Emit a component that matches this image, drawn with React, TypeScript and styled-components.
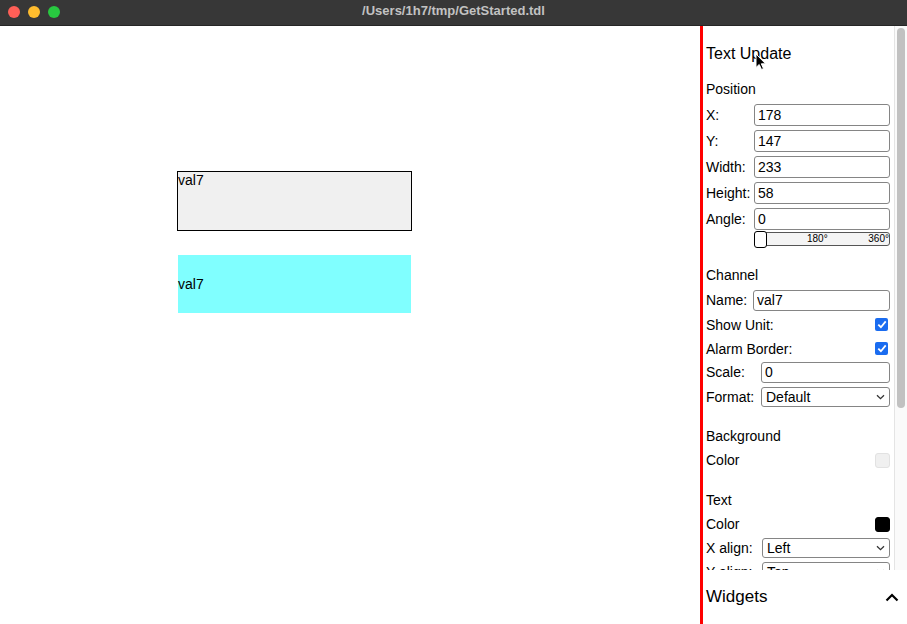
import React from "react";
import styled, { createGlobalStyle } from "styled-components";

const Global = createGlobalStyle`
  html, body { margin: 0; padding: 0; background: #ffffff; }
  body { font-family: "Liberation Sans", Arial, sans-serif; color: #000; }
  * { box-sizing: border-box; }
`;

const Window = styled.div`
  width: 907px;
  height: 624px;
  display: flex;
  flex-direction: column;
  overflow: hidden;
  border-radius: 0 0 10px 10px;
  background: #fff;
`;

const TitleBar = styled.div`
  height: 26px;
  flex: none;
  background: #373737;
  border-bottom: 1px solid #262626;
  display: flex;
  align-items: center;
  position: relative;
`;

const Lights = styled.div`
  display: flex;
  gap: 8px;
  padding-left: 8px;
  margin-top: -2px;
`;

const Light = styled.span<{ $c: string }>`
  width: 12px;
  height: 12px;
  border-radius: 50%;
  background: ${(p) => p.$c};
`;

const Title = styled.div`
  position: absolute;
  left: 0;
  right: 0;
  top: 3px;
  text-align: center;
  font-size: 13px;
  font-weight: bold;
  color: #c2c2c2;
`;

const Main = styled.div`
  flex: 1;
  display: flex;
  min-height: 0;
`;

const Canvas = styled.div`
  width: 703px;
  flex: none;
  position: relative;
  border-right: 3px solid #ff0000;
`;

const Widget = styled.div<{ $bordered?: boolean; $bg: string; $center?: boolean }>`
  position: absolute;
  background: ${(p) => p.$bg};
  border: ${(p) => (p.$bordered ? "1px solid #000" : "none")};
  font-size: 14px;
  display: flex;
  align-items: ${(p) => (p.$center ? "center" : "flex-start")};
  line-height: 16px;
`;

const Panel = styled.div`
  flex: 1;
  display: flex;
  flex-direction: column;
  min-width: 0;
  position: relative;
`;

const ScrollArea = styled.div`
  height: 544px;
  flex: none;
  display: flex;
  overflow: hidden;
`;

const Form = styled.div`
  flex: 1;
  min-width: 0;
  padding: 0 4px 0 3px;
  display: flex;
  flex-direction: column;
  font-size: 14px;
  & > * { flex: none; }
`;

const Track = styled.div`
  width: 13px;
  flex: none;
  border-left: 1px solid #e4e4e4;
  padding: 2px 2px 0 2px;
  background: #fafafa;
`;

const Thumb = styled.div`
  height: 380px;
  border-radius: 5px;
  background: #c1c1c1;
`;

const Heading = styled.div`
  font-size: 16px;
  line-height: 20px;
  margin-top: 18px;
`;

const SectionLabel = styled.div<{ $mt: number }>`
  line-height: 18px;
  margin-top: ${(p) => p.$mt}px;
`;

const Row = styled.div<{ $h: number; $mt?: number }>`
  height: ${(p) => p.$h}px;
  margin-top: ${(p) => p.$mt ?? 0}px;
  display: flex;
  align-items: center;
  justify-content: space-between;
`;

const Label = styled.span<{ $w?: number }>`
  width: ${(p) => (p.$w ? `${p.$w}px` : "auto")};
  flex: none;
  white-space: nowrap;
`;

const TextInput = styled.input<{ $h: number }>`
  flex: 1;
  width: 0;
  min-width: 0;
  height: ${(p) => p.$h}px;
  border: 1px solid #858585;
  border-radius: 3px;
  padding: 0 3px;
  font: 14px "Liberation Sans", Arial, sans-serif;
  color: #000;
  background: #fff;
`;

const SelectBox = styled.div`
  flex: 1;
  min-width: 0;
  height: 20px;
  border: 1px solid #858585;
  border-radius: 3px;
  padding: 0 4px;
  display: flex;
  align-items: center;
  justify-content: space-between;
  font-size: 14px;
  background: #fff;
`;

const Check = styled.span`
  width: 13px;
  height: 13px;
  border-radius: 2px;
  background: #1a6cf0;
  display: flex;
  align-items: center;
  justify-content: center;
  margin-right: 2px;
`;

const Swatch = styled.span<{ $c: string }>`
  width: 15px;
  height: 15px;
  border-radius: 3px;
  background: ${(p) => p.$c};
  border: 1px solid ${(p) => (p.$c === "#000" ? "#000" : "#e2e2e2")};
`;

const SliderRow = styled.div`
  margin: -1px 0 0 48px;
  height: 16px;
  display: flex;
  align-items: center;
  position: relative;
`;

const SliderTrack = styled.div`
  flex: 1;
  height: 14px;
  border: 1px solid #555;
  border-radius: 3px;
  background: #f4f4f4;
  position: relative;
  font-size: 10px;
  line-height: 12px;
`;

const SliderThumb = styled.span`
  position: absolute;
  left: -1px;
  top: -2px;
  width: 13px;
  height: 17px;
  border: 1px solid #000;
  border-radius: 3px;
  background: #fff;
`;

const Tick = styled.span<{ $left?: string; $right?: string }>`
  position: absolute;
  top: 0;
  ${(p) => (p.$left ? `left: ${p.$left};` : "")}
  ${(p) => (p.$right ? `right: ${p.$right};` : "")}
`;

const WidgetsBar = styled.div`
  flex: 1;
  display: flex;
  align-items: center;
  justify-content: space-between;
  padding: 0 8px 0 3px;
  font-size: 17px;
`;

const Cursor = styled.svg`
  position: absolute;
  left: 52px;
  top: 27px;
`;

const Chevron = () => (
  <svg width="9" height="6" viewBox="0 0 9 6">
    <path d="M1 1.2 L4.5 4.6 L8 1.2" fill="none" stroke="#333" strokeWidth="1.3" />
  </svg>
);

const Tickmark = () => (
  <svg width="10" height="9" viewBox="0 0 10 9">
    <path d="M1.3 4.6 L3.9 7.2 L8.7 1.4" fill="none" stroke="#fff" strokeWidth="1.8" />
  </svg>
);

export default function App() {
  return (
    <>
      <Global />
      <Window>
        <TitleBar>
          <Lights>
            <Light $c="#fe5f57" />
            <Light $c="#febc2e" />
            <Light $c="#28c840" />
          </Lights>
          <Title>/Users/1h7/tmp/GetStarted.tdl</Title>
        </TitleBar>
        <Main>
          <Canvas>
            <Widget $bordered $bg="#f0f0f0" style={{ left: 177, top: 145, width: 235, height: 60 }}>
              val7
            </Widget>
            <Widget $center $bg="#80ffff" style={{ left: 178, top: 229, width: 233, height: 58 }}>
              val7
            </Widget>
          </Canvas>
          <Panel>
            <ScrollArea>
              <Form>
                <Heading>Text Update</Heading>
                <SectionLabel $mt={16}>Position</SectionLabel>
                <Row $h={26} $mt={4}>
                  <Label $w={48}>X:</Label>
                  <TextInput $h={22} defaultValue="178" />
                </Row>
                <Row $h={26}>
                  <Label $w={48}>Y:</Label>
                  <TextInput $h={22} defaultValue="147" />
                </Row>
                <Row $h={26}>
                  <Label $w={48}>Width:</Label>
                  <TextInput $h={22} defaultValue="233" />
                </Row>
                <Row $h={26}>
                  <Label $w={48}>Height:</Label>
                  <TextInput $h={22} defaultValue="58" />
                </Row>
                <Row $h={26}>
                  <Label $w={48}>Angle:</Label>
                  <TextInput $h={22} defaultValue="0" />
                </Row>
                <SliderRow>
                  <SliderTrack>
                    <SliderThumb />
                    <Tick $left="52px">180°</Tick>
                    <Tick $right="0">360°</Tick>
                  </SliderTrack>
                </SliderRow>
                <SectionLabel $mt={19}>Channel</SectionLabel>
                <Row $h={24} $mt={4}>
                  <Label $w={47}>Name:</Label>
                  <TextInput $h={21} defaultValue="val7" />
                </Row>
                <Row $h={25}>
                  <Label>Show Unit:</Label>
                  <Check>
                    <Tickmark />
                  </Check>
                </Row>
                <Row $h={23}>
                  <Label>Alarm Border:</Label>
                  <Check>
                    <Tickmark />
                  </Check>
                </Row>
                <Row $h={24}>
                  <Label $w={55}>Scale:</Label>
                  <TextInput $h={21} defaultValue="0" />
                </Row>
                <Row $h={25}>
                  <Label $w={55}>Format:</Label>
                  <SelectBox>
                    Default
                    <Chevron />
                  </SelectBox>
                </Row>
                <SectionLabel $mt={18}>Background</SectionLabel>
                <Row $h={24} $mt={3}>
                  <Label>Color</Label>
                  <Swatch $c="#f0f0f0" />
                </Row>
                <SectionLabel $mt={19}>Text</SectionLabel>
                <Row $h={24} $mt={3}>
                  <Label>Color</Label>
                  <Swatch $c="#000" />
                </Row>
                <Row $h={24}>
                  <Label $w={56}>X align:</Label>
                  <SelectBox>
                    Left
                    <Chevron />
                  </SelectBox>
                </Row>
                <Row $h={24}>
                  <Label $w={56}>Y align:</Label>
                  <SelectBox>
                    Top
                    <Chevron />
                  </SelectBox>
                </Row>
              </Form>
              <Track>
                <Thumb />
              </Track>
            </ScrollArea>
            <WidgetsBar>
              <span>Widgets</span>
              <svg width="14" height="9" viewBox="0 0 14 9">
                <path d="M1.5 7.5 L7 2 L12.5 7.5" fill="none" stroke="#000" strokeWidth="2.2" />
              </svg>
            </WidgetsBar>
            <Cursor width="12" height="18" viewBox="0 0 12 18">
              <path d="M1 1 L1 14.5 L4.2 11.5 L6.5 16.5 L8.5 15.6 L6.3 10.8 L10.6 10.8 Z" fill="#000" stroke="#fff" strokeWidth="1" />
            </Cursor>
          </Panel>
        </Main>
      </Window>
    </>
  );
}
